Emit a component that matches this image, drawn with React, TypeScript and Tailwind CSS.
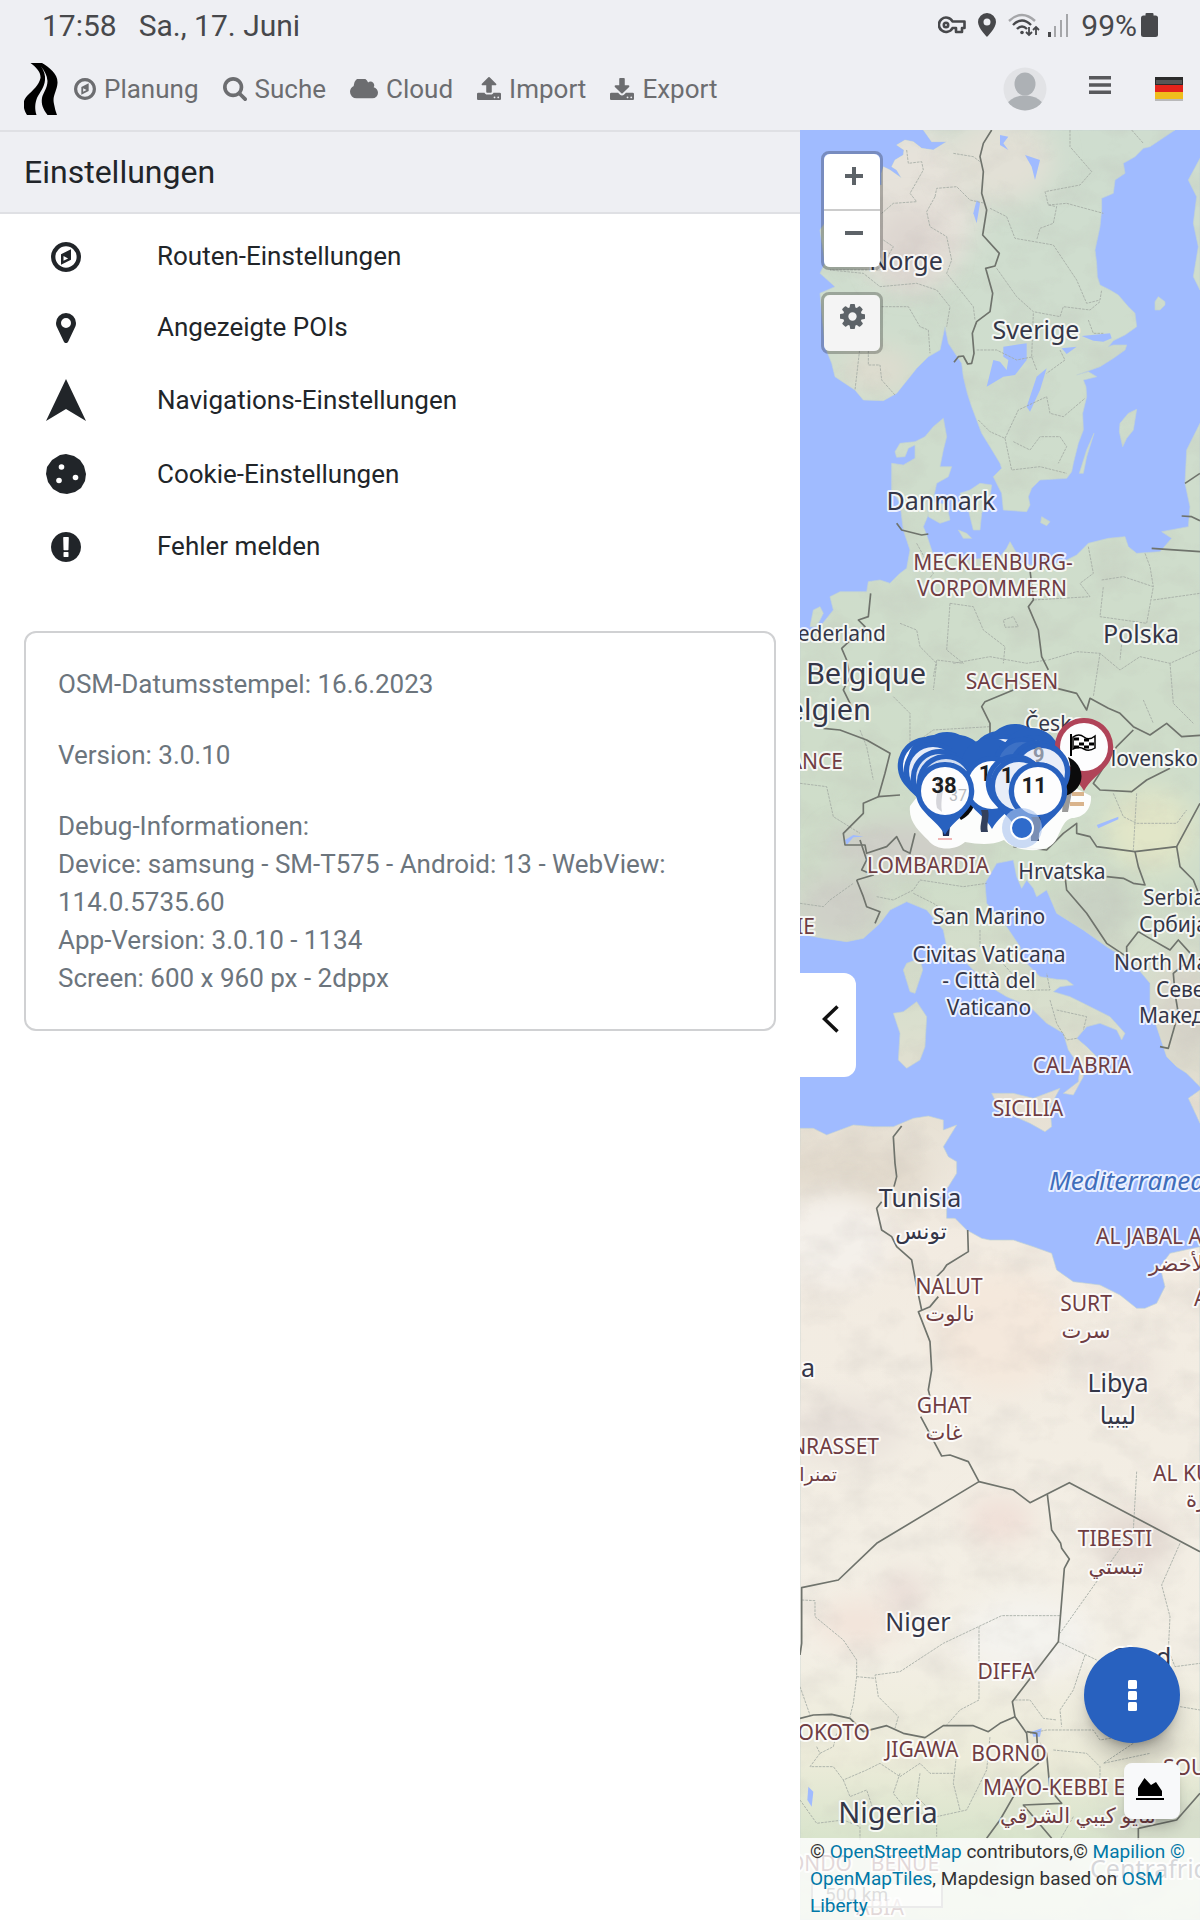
import type { ReactNode } from "react";

const ICONS = {
  compass:
    "M1664 896q0 209-103 385.500t-279.500 279.500-385.500 103-385.500-103-279.500-279.500-103-385.500 103-385.500 279.500-279.500 385.500-103 385.500 103 279.500 279.500 103 385.500zM1440 896a544 544 0 1 0-1088 0 544 544 0 1 0 1088 0zM1152 497v542l-512 256v-542zM768 850v238l236-118z",
  search:
    "M1216 832q0-185-131.500-316.500t-316.500-131.500-316.500 131.500-131.500 316.500 131.500 316.500 316.500 131.500 316.500-131.500 131.500-316.500zm512 832q0 52-38 90t-90 38q-54 0-90-38l-343-342q-179 124-399 124-143 0-273.500-55.500t-225-150-150-225-55.500-273.500 55.500-273.500 150-225 225-150 273.500-55.500 273.500 55.500 225 150 150 225 55.500 273.500q0 220-124 399l343 343q37 37 37 90z",
  cloud:
    "M1856 1152q0 159-112.500 271.500t-271.500 112.500h-1088q-185 0-316.500-131.500t-131.500-316.500q0-132 71-241.500t187-163.500q-2-28-2-43 0-212 150-362t362-150q158 0 286.500 88t187.500 230q70-62 166-62 106 0 181 75t75 181q0 75-41 138 129 30 213 134.500t84 239.500z",
  upload:
    "M1344 1472q0-26-19-45t-45-19-45 19-19 45 19 45 45 19 45-19 19-45zm256 0q0-26-19-45t-45-19-45 19-19 45 19 45 45 19 45-19 19-45zm128-224v320q0 40-28 68t-68 28h-1472q-40 0-68-28t-28-68v-320q0-40 28-68t68-28h427q21 56 70.500 92t110.500 36h256q61 0 110.500-36t70.500-92h427q40 0 68 28t28 68zm-325-648q-17 40-59 40h-256v448q0 26-19 45t-45 19h-256q-26 0-45-19t-19-45v-448h-256q-42 0-59-40-17-39 14-69l448-448q18-19 45-19t45 19l448 448q31 30 14 69z",
  download:
    "M1344 1344q0-26-19-45t-45-19-45 19-19 45 19 45 45 19 45-19 19-45zm256 0q0-26-19-45t-45-19-45 19-19 45 19 45 45 19 45-19 19-45zm128-224v320q0 40-28 68t-68 28h-1472q-40 0-68-28t-28-68v-320q0-40 28-68t68-28h465l135 136q58 56 136 56t136-56l136-136h464q40 0 68 28t28 68zm-325-569q17 41-14 70l-448 448q-18 19-45 19t-45-19l-448-448q-31-29-14-70 17-39 59-39h256v-448q0-26 19-45t45-19h256q26 0 45 19t19 45v448h256q42 0 59 39z",
  marker:
    "M1152 640q0-106-75-181t-181-75-181 75-75 181 75 181 181 75 181-75 75-181zm256 0q0 109-33 179l-364 774q-16 33-47.500 52t-67.500 19-67.500-19-46.500-52l-365-774q-33-70-33-179 0-212 150-362t362-150 362 150 150 362z",
  alert:
    "M896 128q209 0 385.500 103t279.500 279.500 103 385.500-103 385.500-279.500 279.500-385.500 103-385.500-103-279.500-279.500-103-385.500 103-385.500 279.500-279.500 385.500-103zm128 1247v-190q0-14-9-23.500t-22-9.500h-192q-13 0-23 10t-10 23v190q0 13 10 23t23 10h192q13 0 22-9.500t9-23.500zm-2-344l18-621q0-12-10-18-10-8-24-8h-220q-14 0-24 8-10 6-10 18l17 621q0 10 10 17.500t24 7.500h185q14 0 23.500-7.500t10.500-17.500z",
  gear:
    "M1152 896q0-106-75-181t-181-75-181 75-75 181 75 181 181 75 181-75 75-181zm512-109v222q0 12-8 23t-20 13l-185 28q-19 54-39 91 35 50 107 138 10 12 10 25t-9 23q-27 37-99 108t-94 71q-12 0-26-9l-138-108q-44 23-91 38-16 136-29 186-7 28-36 28h-222q-14 0-24.500-8.500t-11.500-21.500l-28-184q-49-16-90-37l-141 107q-10 9-25 9-14 0-25-11-126-114-165-168-7-10-7-23 0-12 8-23 15-21 51-66.500t54-70.500q-27-50-41-99l-183-27q-13-2-21-12.500t-8-23.500v-222q0-12 8-23t19-13l186-28q14-46 39-92-40-57-107-138-10-12-10-24 0-10 9-23 26-36 98.500-107.500t94.500-71.500q13 0 26 10l138 107q44-23 91-38 16-136 29-186 7-28 36-28h222q14 0 24.500 8.500t11.500 21.500l28 184q49 16 90 37l142-107q9-9 24-9 13 0 25 10 129 119 165 170 7 8 7 22 0 12-8 23-15 21-51 66.500t-54 70.500q26 50 41 98l183 28q13 2 21 12.500t8 23.500z",
};

type IconName = keyof typeof ICONS;

function Icon({ name, className, viewBox }: { name: IconName; className?: string; viewBox: string }) {
  return (
    <svg viewBox={viewBox} className={className} fill="currentColor" fillRule="evenodd" aria-hidden="true">
      <path d={ICONS[name]} />
    </svg>
  );
}

const NAV: { icon: IconName; label: string; viewBox: string; size: string }[] = [
  { icon: "compass", label: "Planung", viewBox: "128 128 1536 1536", size: "h-[22px] w-[22px]" },
  { icon: "search", label: "Suche", viewBox: "64 128 1664 1664", size: "h-6 w-6" },
  { icon: "cloud", label: "Cloud", viewBox: "-64 256 1920 1280", size: "h-5 w-7" },
  { icon: "upload", label: "Import", viewBox: "64 128 1664 1536", size: "h-6 w-6" },
  { icon: "download", label: "Export", viewBox: "64 0 1664 1536", size: "h-6 w-6" },
];

function StatusBar() {
  return (
    <div className="flex h-[50px] items-center justify-between px-[42px] text-[30px] text-[#47484b]">
      <div className="flex gap-[22px]">
        <span>17:58</span>
        <span>Sa., 17. Juni</span>
      </div>
      <div className="flex items-center gap-2">
        <svg viewBox="0 0 28 18" className="h-[18px] w-7" fill="none" stroke="currentColor" strokeWidth="2.600" aria-hidden="true">
          <path d="M14.500 5.500H26.500V12H24v4h-6v-4h-3.500a7.200 7.200 0 1 1 0-6.500z" strokeLinejoin="round" />
          <circle cx="8" cy="9" r="2.200" />
        </svg>
        <svg viewBox="0 0 18 24" className="ml-1 h-6 w-[18px]" fill="currentColor" fillRule="evenodd" aria-hidden="true">
          <path d="M9 0a9 9 0 0 1 9 9c0 6-9 15-9 15S0 15 0 9a9 9 0 0 1 9-9zM9 5.500a3.500 3.500 0 1 0 0 7 3.500 3.500 0 0 0 0-7z" />
        </svg>
        <svg viewBox="0 0 32 24" className="ml-1 h-6 w-8" fill="none" stroke="currentColor" strokeWidth="2.400" aria-hidden="true">
          <path d="M1 8Q14 -4 27 8" stroke="#a5a6a9" />
          <path d="M5 12Q14 3 23 12M9 16Q14 11 19 16" />
          <circle cx="14" cy="19.500" r="1.800" fill="currentColor" stroke="none" />
          <path d="M21 14v8m-3-3 3 3 3-3M28 22v-8m-3 3 3-3 3 3" strokeWidth="1.800" />
        </svg>
        <svg viewBox="0 0 21 23" className="h-[23px] w-[21px]" fill="#a5a6a9" aria-hidden="true">
          <rect y="18" width="3" height="5" fill="#47484b" />
          <rect x="6" y="12" width="2" height="11" />
          <rect x="12" y="6" width="2" height="17" />
          <rect x="18" y="0" width="2" height="23" />
        </svg>
        <div className="ml-1 flex items-center gap-1">
          <span>99%</span>
          <svg viewBox="0 0 17 24" className="h-6 w-[17px]" fill="currentColor" aria-hidden="true">
            <rect x="4.500" width="8" height="5" rx="1" />
            <rect y="2.500" width="17" height="21.500" rx="2.500" />
          </svg>
        </div>
      </div>
    </div>
  );
}

function Header() {
  return (
    <header className="border-b-2 border-[#dfe0e4] bg-[#eeeff3]">
      <StatusBar />
      <div className="flex h-20 items-center pr-4 pb-0.5 pl-6">
        <a href="#" aria-label="Startseite" className="mr-4">
          <svg viewBox="0 0 34 52" className="h-[52px] w-[34px]" aria-hidden="true">
            <path d="M6.500 0H18C26 5 34 11 33.500 20C33 28 28 33 30 41Q31 47 33 52H3C-2 44 -1 37 3 33C9 27 15 22 16.500 15C17 9 12 4 6.500 0Z" />
            <path d="M17 3.500C20 8 21.500 12 21 17C20.500 24 16 29 13 35C11 40 10.500 46 12.500 52H23.500C19 46 17 41 18 35C19 30 23.500 25 23.500 18C23 12 20.500 8 17 3.500Z" fill="#eeeff3" />
          </svg>
        </a>
        <nav className="flex items-center gap-6 text-[26px] text-[#6c6d70]">
          {NAV.map((item) => (
            <a key={item.label} href="#" className="flex items-center gap-2">
              <Icon name={item.icon} viewBox={item.viewBox} className={item.size} />
              {item.label}
            </a>
          ))}
        </nav>
        <div className="ml-auto flex items-center">
          <button type="button" aria-label="Profil" className="mr-[42px]">
            <svg viewBox="0 0 44 44" className="h-11 w-11" aria-hidden="true">
              <clipPath id="avatar">
                <circle cx="22" cy="22" r="21.500" />
              </clipPath>
              <g clipPath="url(#avatar)">
                <rect width="44" height="44" fill="#e2e3e6" />
                <ellipse cx="22" cy="17" rx="10.500" ry="11.500" fill="#adb1b5" />
                <ellipse cx="22" cy="41" rx="19" ry="12.500" fill="#adb1b5" />
              </g>
            </svg>
          </button>
          <button type="button" aria-label="Menü" className="mr-[43px] pb-2 text-[#58595c]">
            <svg viewBox="0 0 22 18" className="h-[18px] w-[22px]" fill="currentColor" aria-hidden="true">
              <path d="M0 0h22v3.500H0zM0 7.200h22v3.500H0zM0 14.500h22v3.500H0z" />
            </svg>
          </button>
          <button type="button" aria-label="Sprache: Deutsch">
            <svg viewBox="0 0 30 24" className="h-6 w-[30px]" aria-hidden="true">
              <rect x="1" y="2" width="28" height="22" fill="#b9b9ba" />
              <rect x="1" y="0" width="28" height="9" fill="#2b2b2b" />
              <rect x="2" y="3" width="26" height="4" fill="#565656" />
              <rect x="1" y="8" width="28" height="7" fill="#e3231b" />
              <rect x="1" y="15" width="28" height="7" fill="#f0bd1c" />
            </svg>
          </button>
        </div>
      </div>
    </header>
  );
}

const MENU: { label: string; row: string; icon: ReactNode }[] = [
  {
    label: "Routen-Einstellungen",
    row: "h-[71px]",
    icon: <Icon name="compass" viewBox="128 128 1536 1536" className="h-[30px] w-[30px]" />,
  },
  {
    label: "Angezeigte POIs",
    row: "h-[71px]",
    icon: <Icon name="marker" viewBox="384 128 1024 1536" className="h-[30px] w-5" />,
  },
  {
    label: "Navigations-Einstellungen",
    row: "h-[74px]",
    icon: (
      <svg viewBox="0 0 40 42" className="h-[42px] w-10" fill="currentColor" aria-hidden="true">
        <path d="M20 0L40 42L20 30L0 42Z" />
      </svg>
    ),
  },
  {
    label: "Cookie-Einstellungen",
    row: "h-[74px]",
    icon: (
      <svg viewBox="0 0 40 40" className="h-10 w-10" aria-hidden="true">
        <path
          d="M14 1L20 0L28 2L34 6L38 12L40 20L39 27L35 34L29 38L21 40L14 39L7 35L2 28L0 20L1 13L6 6Z"
          fill="currentColor"
        />
        <g fill="#fff">
          <circle cx="15.500" cy="13" r="2.800" />
          <circle cx="13" cy="26.500" r="2.800" />
          <circle cx="29.500" cy="23.500" r="2.800" />
        </g>
      </svg>
    ),
  },
  {
    label: "Fehler melden",
    row: "h-[71px]",
    icon: <Icon name="alert" viewBox="128 128 1536 1536" className="h-[30px] w-[30px]" />,
  },
];

function Settings() {
  return (
    <aside className="w-2/3 bg-white">
      <div className="flex h-[82px] items-center border-b-2 border-[#dfe0e4] bg-[#eeeff3] pl-6">
        <h1 className="text-[32px] text-[#212529]">Einstellungen</h1>
      </div>
      <ul className="pt-[7px]">
        {MENU.map((item) => (
          <li key={item.label}>
            <button
              type="button"
              className={`flex w-full items-center gap-[71px] pl-[46px] text-left text-[26px] text-[#212529] ${item.row}`}
            >
              <span className="flex w-10 justify-center">{item.icon}</span>
              {item.label}
            </button>
          </li>
        ))}
      </ul>
      <div className="mx-6 mt-[49px] rounded-xl border-2 border-[#d0d1d3] px-8 py-8 text-[26px] leading-[38px] text-[#6c757d]">
        <p className="mb-[33px]">OSM-Datumsstempel: 16.6.2023</p>
        <p className="mb-[33px]">Version: 3.0.10</p>
        <p>
          Debug-Informationen:
          <br />
          Device: samsung - SM-T575 - Android: 13 - WebView: 114.0.5735.60
          <br />
          App-Version: 3.0.10 - 1134
          <br />
          Screen: 600 x 960 px - 2dppx
        </p>
      </div>
    </aside>
  );
}

// Coastlines and borders, three units to the pixel.
const LAND = [
  "370,0 395,35 440,35 400,60 365,55 340,35 315,30 290,45 312,60 310,75 285,90 275,110 290,120 305,145 270,120 250,110 245,130 245,165 150,180 110,230 60,300 75,400 60,430 105,470 60,490 75,650 95,700 105,740 165,780 190,810 250,812 290,790 350,715 385,680 420,660 435,590 445,640 485,700 490,740 502,790 515,830 530,870 545,910 570,950 600,1000 605,1015 580,1040 595,1070 605,1090 610,1140 680,1145 690,1125 685,1100 695,1075 720,1050 800,1045 815,1025 820,1000 835,940 850,900 848,850 860,800 858,770 850,750 890,740 865,725 830,735 900,710 940,685 975,660 980,645 940,645 925,650 940,632 975,615 1010,590 1005,550 985,530 955,495 930,480 900,465 892,440 890,400 885,360 900,290 905,240 905,205 940,190 945,150 975,130 970,100 1005,80 1030,55 1050,50 1110,10 1125,0",
  "1200,85 1165,150 1190,200 1180,280 1195,350 1180,440 1200,480",
  "1200,880 1160,960 1155,1060 1170,1130 1165,1190 1085,1205 1115,1225 1080,1265 1010,1270 985,1250 975,1220 925,1225 865,1240 830,1275 790,1295 720,1310 660,1300 650,1270 630,1235 620,1255 600,1280 500,1290 440,1275 400,1275 380,1215 370,1190 395,1130 410,1060 445,1040 455,1010 420,1010 430,960 440,920 430,865 400,890 375,920 345,935 300,940 285,965 290,982 315,980 325,955 345,945 345,985 310,1005 275,1000 275,1080 300,1120 310,1200 330,1260 320,1315 300,1330 270,1360 240,1350 205,1355 200,1385 120,1385 90,1400 100,1440 60,1490 30,1510 0,1530 0,2412 70,2425 140,2435 190,2425 240,2380 270,2340 320,2315 380,2340 430,2400 440,2450 500,2500 570,2570 620,2600 690,2630 740,2680 790,2710 805,2760 840,2810 835,2855 790,2890 820,2895 850,2840 850,2815 890,2780 860,2750 830,2725 860,2690 900,2680 950,2700 965,2730 975,2710 930,2660 850,2620 810,2600 760,2585 780,2570 820,2565 800,2550 770,2548 720,2540 670,2490 660,2450 620,2390 560,2320 555,2260 590,2200 640,2190 650,2240 665,2275 680,2250 700,2275 710,2300 740,2280 770,2350 850,2400 920,2450 1000,2500 1050,2560 1050,2630 1080,2720 1100,2780 1130,2810 1160,2830 1200,2870",
  "380,1110 440,1125 450,1170 420,1180 385,1160",
  "480,1090 510,1080 540,1060 575,1065 570,1100 545,1150 540,1200 520,1200 505,1140",
  "475,1200 500,1210 515,1225 490,1225",
  "725,1160 750,1175 740,1187 722,1178",
  "1010,838 985,850 960,880 958,905 968,950 980,925 1000,900",
  "882,910 860,960 838,1030 850,1030 860,980",
  "1065,515 1075,500 1095,515 1095,525 1080,540 1065,540",
  "60,1430 70,1450 50,1490 30,1490 40,1440",
  "320,2500 360,2485 368,2520 345,2590 330,2585 310,2520",
  "280,2650 310,2645 350,2615 380,2660 375,2750 360,2790 320,2815 295,2790 300,2710",
  "575,2890 640,2890 700,2905 780,2875 750,2930 755,2990 735,3005 690,2980 600,2940",
  "1200,2880 1165,2905 1200,2980",
  "0,2995 40,2995 80,3015 160,2985 220,2990 280,2990 340,2965 385,2958 430,2970 430,3000 470,2985 430,3050 445,3080 470,3095 470,3130 445,3170 410,3200 410,3225 440,3235 440,3265 465,3265 500,3300 545,3325 570,3330 640,3330 700,3350 755,3370 770,3420 820,3455 860,3460 900,3465 960,3495 1010,3535 1035,3535 1070,3520 1095,3470 1085,3430 1080,3410 1110,3370 1200,3350 1200,5370 0,5370",
];

const LAKES = [
  "610,650 680,640 680,690 645,735 610,740 560,770 580,690 600,695 620,720 625,690 610,680",
  "740,715 720,780 690,845 680,830 710,740",
  "675,75 720,90 705,150 695,110",
  "600,15 625,20 610,40 625,60 600,45",
  "530,210 540,220 530,280 520,250",
  "845,618 930,610 935,625 910,635 880,632",
  "785,655 830,650 800,672",
  "695,4805 725,4795 720,4820 700,4820",
  "25,4970 40,4985 35,5030 22,5010",
  "890,2085 955,2060 955,2068 895,2095",
  "135,2130 160,2115 190,2120 160,2122 140,2145",
];

const BORDERS = [
  "575,0 550,40 540,80 550,125 545,190 560,240 548,315 598,370 585,408 557,415 578,490 570,545 530,575 517,610 522,670 515,700 503,702 490,678 475,680 462,697",
  "290,1180 305,1200 365,1215 385,1212",
  "212,1390 205,1460 175,1470 195,1490 125,1555 140,1590 150,1640 130,1680 155,1730",
  "70,1795 120,1800 200,1830 270,1870 255,1930 235,2000 300,1995",
  "235,2000 190,2020 190,2050 130,2110 135,2145 195,2145 200,2170 260,2150 290,2120 310,2160 330,2170 345,2110",
  "690,1320 700,1410 685,1430 715,1500 725,1580 745,1620",
  "640,1680 555,1715 545,1730 570,1780 570,1810",
  "750,1670 830,1690 860,1740 870,1705 925,1735 960,1750 1000,1790 1050,1815 1100,1780 1145,1820 1200,1816",
  "1055,1255 1200,1265",
  "1145,1158 1175,1160 1200,1172",
  "1155,1060 1200,1030",
  "1000,1800 950,1850 880,1960 900,1980 995,1985 1040,1950 1110,1915",
  "640,2150 740,2160 790,2110 830,2080 830,2110 870,2120 890,2150 1005,2165 1130,2150 1200,2020",
  "1005,2165 1015,2210 1035,2265 1000,2260 970,2245 920,2240",
  "795,2240 800,2280 860,2350 920,2440 980,2480 980,2450 1015,2405",
  "1015,2405 1040,2420 1110,2460 1135,2430 1180,2480 1120,2530 1125,2590 1135,2650 1105,2755 1080,2750",
  "1130,2150 1140,2210 1180,2250 1200,2300",
  "170,2250 190,2300 200,2330 240,2345 225,2380",
  "180,2130 200,2190 185,2220 220,2235 170,2250",
  "305,2988 280,3020 285,3100 290,3140 282,3170",
  "245,3215 230,3235 245,3300 275,3320 290,3350 335,3390 350,3470 365,3540",
  "503,3300 505,3365 440,3405 430,3420 410,3440",
  "415,3500 390,3530 355,3545 390,3635 395,3720 385,3780 390,3800",
  "362,3860 410,3950 425,3978 450,3975 505,3995 537,4055 640,4080 690,4118 808,4058 1200,4265",
  "537,4055 230,4240 115,4350 5,4373 5,4540 0,4575",
  "742,4093 755,4200 782,4240 785,4255 808,4287 793,4315 775,4535 637,4715 645,4760 680,4810 683,4840",
  "0,4765 40,4755 95,4753 150,4765 190,4805 260,4787 310,4810 375,4823 430,4787 520,4787 565,4805 600,4780 645,4760",
  "680,4805 710,4810 715,4900 665,4940 640,5000 600,5070 560,5125",
  "720,4840 740,4870 750,4980 785,5020 670,5025 755,5125",
  "1200,4990 1130,5070 1015,5095 1015,5130",
];

const REGIONS = [
  "320,60 325,100 365,95 370,120 330,190 350,215 280,220 245,250",
  "405,200 410,175 470,170 510,210 555,220",
  "405,200 380,245 390,290 440,320 455,390 440,430 520,530 525,570",
  "250,330 280,350 240,420 90,420 190,430 240,470 350,460 410,480 450,530 440,590",
  "245,530 325,530 360,590 385,600 390,670",
  "180,650 165,780",
  "205,640 205,705 240,705 245,750 285,795",
  "570,235 620,260 645,325 760,345 830,450 860,520 900,510 905,480",
  "590,415 650,500 700,545 780,560 790,530 870,540 900,515",
  "810,0 810,50 875,125 840,165 735,185 745,225 770,230 760,280 720,295 710,330",
  "745,225 800,220 910,250",
  "995,0 1030,40",
  "460,70 520,80 540,95",
  "700,550 695,680 710,720",
  "530,660 590,660 650,690 700,680",
  "780,660 795,690 740,730",
  "535,870 570,905 615,925 655,840 740,800 750,850 790,860 855,805",
  "615,925 635,1020 720,1010 800,1030",
  "640,935 690,960 720,920 780,920 800,950 775,1000",
  "865,570 880,610 910,610",
  "350,1240 400,1330 370,1370 420,1350",
  "450,1420 440,1560 490,1600 410,1590 400,1640",
  "450,1420 520,1430 550,1500 615,1550 610,1600",
  "615,1490 610,1470 640,1460 655,1490 615,1492",
  "300,1480 350,1500 360,1550 410,1600 400,1680",
  "460,1600 570,1580 680,1600 740,1590",
  "865,1250 880,1330 840,1360 870,1400 700,1410",
  "905,1350 970,1340 1060,1370 1040,1480 900,1460 910,1370",
  "1035,1270 1050,1310 1060,1370",
  "1060,1410 1200,1390",
  "745,1590 830,1565 900,1570 960,1620 1020,1580 1110,1600 1200,1560",
  "900,1570 880,1700",
  "970,1490 960,1590",
  "1110,1600 1120,1720 1180,1780",
  "1030,1710 1060,1780",
  "940,1990 970,2060 1010,2080 1130,2080 1160,2040",
  "1010,1990 1000,2160",
  "0,1960 80,1970 100,2060 180,2110",
  "280,1700 330,1750 330,1850 400,1800 570,1790",
  "180,1800 200,1850 220,1950",
  "0,2320 70,2330 90,2310 160,2260",
  "230,2300 280,2310 340,2280 360,2250 490,2270 560,2260",
  "340,2290 400,2320 430,2340",
  "540,2400 540,2450 590,2480 680,2580 750,2580 740,2530",
  "750,2610 770,2680 800,2730 830,2725",
  "770,2640 860,2660 850,2700",
  "1010,4025 1000,4200 780,4510",
  "1140,4240 1085,4365 1110,4460 1105,4560 1125,4610 1200,4600",
  "775,4535 890,4590",
  "855,4575 820,4680 780,4740 785,4790",
  "780,4457 605,4457 430,4540 300,4625 225,4635 235,4700 295,4760 285,4795",
  "537,4490 537,4710 480,4740 440,4785",
  "5,4410 45,4412 45,4460 130,4530 170,4590 170,4640 160,4720 150,4760",
  "170,4640 225,4645",
  "0,4670 30,4755",
  "645,4710 690,4710 730,4765 770,4770",
  "690,4810 740,4800 880,4800 900,4830 960,4820",
  "760,4860 860,4870 900,4910 900,4970",
  "1000,4840 910,4900 1050,4870",
  "1140,4730 1200,4740",
  "50,4850 60,4870 30,4910 100,4910 130,4950 200,4920 240,4900 300,4940 360,4900 390,4930 460,4930",
  "60,4870 100,4850 110,4810",
  "300,4930 280,4990 320,5040 410,5060 410,5120",
  "360,4930 350,5000 410,5060 500,5040 540,4960 560,4920 570,4820",
  "470,4870 460,4960 480,5040",
  "0,5010 50,5080 130,5070 180,5090 180,5130",
  "130,4950 150,5000 200,4980 220,5040",
  "820,5060 780,5130",
];

// Soft relief shading: cx, cy, rx, ry, colour.
const RELIEF: [number, number, number, number, string][] = [
  [330, 230, 200, 240, "#e6e2da"],
  [330, 350, 110, 120, "#ddd6d0"],
  [600, 90, 160, 130, "#e2e0d6"],
  [230, 720, 110, 70, "#dedccf"],
  [300, 2150, 220, 70, "#cfcec8"],
  [120, 2330, 130, 110, "#cfd0c8"],
  [1050, 2100, 130, 120, "#e2e6c8"],
  [880, 2330, 120, 90, "#c9d2c4"],
  [1150, 2650, 90, 170, "#d8d5ca"],
  [150, 3130, 240, 100, "#e2dacd"],
  [100, 3330, 170, 140, "#f4f0ea"],
  [600, 3600, 200, 180, "#f4e8dc"],
  [950, 3720, 120, 100, "#ece4dc"],
  [130, 3900, 180, 100, "#eae3dc"],
  [1000, 4230, 120, 90, "#e3d9d2"],
  [600, 4170, 100, 70, "#f0e0d8"],
  [310, 4390, 70, 60, "#e8dcd6"],
  [170, 4480, 120, 70, "#f2e4da"],
  [680, 4520, 200, 120, "#f4f3ee"],
  [1080, 5080, 200, 70, "#d5ddcb"],
];

type Label = {
  t: string;
  x: number;
  y: number;
  size?: number;
  anchor?: "start" | "middle" | "end";
  kind?: "country" | "region" | "sea";
};

const LABELS: Label[] = [
  { t: "Norge", x: 106, y: 270, size: 25 },
  { t: "Sverige", x: 236, y: 339, size: 25 },
  { t: "Danmark", x: 141, y: 510, size: 25 },
  { t: "MECKLENBURG-", x: 193, y: 570, kind: "region" },
  { t: "VORPOMMERN", x: 192, y: 596, kind: "region" },
  { t: "ederland", x: 86, y: 641, anchor: "end" },
  { t: "Polska", x: 341, y: 643, size: 25 },
  { t: "Belgique", x: 66, y: 684, size: 29 },
  { t: "elgien", x: 71, y: 720, size: 29, anchor: "end" },
  { t: "SACHSEN", x: 212, y: 689, kind: "region" },
  { t: "Česko", x: 225, y: 731, anchor: "start" },
  { t: "ANCE", x: 43, y: 769, anchor: "end", kind: "region" },
  { t: "lovensko", x: 398, y: 766, anchor: "end" },
  { t: "LOMBARDIA", x: 128, y: 873, kind: "region" },
  { t: "Hrvatska", x: 262, y: 879 },
  { t: "Serbia", x: 343, y: 905, anchor: "start" },
  { t: "Србија", x: 339, y: 932, anchor: "start" },
  { t: "San Marino", x: 189, y: 924 },
  { t: "IE", x: 15, y: 934, anchor: "end", kind: "region" },
  { t: "Civitas Vaticana", x: 189, y: 962 },
  { t: "- Città del", x: 189, y: 988 },
  { t: "Vaticano", x: 189, y: 1015 },
  { t: "North Ma", x: 314, y: 970, anchor: "start" },
  { t: "Севе", x: 356, y: 997, anchor: "start" },
  { t: "Македо", x: 339, y: 1023, anchor: "start" },
  { t: "CALABRIA", x: 282, y: 1073, kind: "region" },
  { t: "SICILIA", x: 228, y: 1116, kind: "region" },
  { t: "Mediterranean", x: 249, y: 1190, size: 26, anchor: "start", kind: "sea" },
  { t: "Tunisia", x: 120, y: 1207, size: 25 },
  { t: "تونس", x: 121, y: 1239, size: 22 },
  { t: "NALUT", x: 149, y: 1294, kind: "region" },
  { t: "نالوت", x: 150, y: 1321, kind: "region" },
  { t: "AL JABAL A", x: 296, y: 1244, anchor: "start", kind: "region" },
  { t: "الأخضر", x: 349, y: 1271, anchor: "start", kind: "region" },
  { t: "SURT", x: 286, y: 1311, kind: "region" },
  { t: "سرت", x: 286, y: 1338, kind: "region" },
  { t: "A", x: 394, y: 1306, anchor: "start", kind: "region" },
  { t: "a", x: 15, y: 1377, size: 25, anchor: "end" },
  { t: "Libya", x: 318, y: 1392, size: 25 },
  { t: "ليبيا", x: 318, y: 1424, size: 24 },
  { t: "GHAT", x: 144, y: 1413, kind: "region" },
  { t: "غات", x: 144, y: 1440, kind: "region" },
  { t: "NRASSET", x: 79, y: 1454, anchor: "end", kind: "region" },
  { t: "تمنراست", x: 37, y: 1481, size: 19, anchor: "end", kind: "region" },
  { t: "AL KU", x: 353, y: 1481, anchor: "start", kind: "region" },
  { t: "الكفرة", x: 386, y: 1507, anchor: "start", kind: "region" },
  { t: "TIBESTI", x: 315, y: 1546, kind: "region" },
  { t: "تبستي", x: 316, y: 1574, kind: "region" },
  { t: "Niger", x: 118, y: 1631, size: 25 },
  { t: "DIFFA", x: 206, y: 1679, kind: "region" },
  { t: "Chad", x: 341, y: 1666, size: 25 },
  { t: "OKOTO", x: 70, y: 1740, anchor: "end", kind: "region" },
  { t: "JIGAWA", x: 122, y: 1757, kind: "region" },
  { t: "BORNO", x: 209, y: 1761, kind: "region" },
  { t: "SOU", x: 363, y: 1775, anchor: "start", kind: "region" },
  { t: "MAYO-KEBBI E", x: 183, y: 1795, anchor: "start", kind: "region" },
  { t: "مايو كيبي الشرقي", x: 200, y: 1823, anchor: "start", kind: "region" },
  { t: "Nigeria", x: 88, y: 1823, size: 29 },
  { t: "ONDO", x: 52, y: 1871, anchor: "end", kind: "region" },
  { t: "BENUE", x: 105, y: 1871, kind: "region" },
  { t: "ABIA", x: 80, y: 1915, kind: "region" },
  { t: "Centrafrique", x: 290, y: 1878, size: 25, anchor: "start" },
];

const LABEL_FILL = { country: "#343648", region: "#6f3d43", sea: "#3f6dbb" };

function Pin({ x, y, color = "#2861bf", opacity = 1 }: { x: number; y: number; color?: string; opacity?: number }) {
  return (
    <g transform={`translate(${x} ${y})`}>
      <path d="M0 -29A29 29 0 0 1 23 18C15 28 5 34 0 44C-5 34 -15 28 -23 18A29 29 0 0 1 0 -29Z" fill={color} />
      <circle r="24" fill="#fdfdfe" opacity={opacity} />
    </g>
  );
}

function PinText({ x, y, children }: { x: number; y: number; children: string }) {
  return (
    <text x={x} y={y} textAnchor="middle" fontSize="22" fontWeight="700" fontFamily="Roboto, sans-serif" fill="#1c1e22">
      {children}
    </text>
  );
}

function Markers() {
  return (
    <g>
      <path
        d="M110 806C108 822 120 832 128 840C138 853 158 849 165 842C178 844 190 846 204 840C214 852 250 856 257 838C262 828 264 820 272 818C284 818 292 808 291 796L240 770L130 780Z"
        fill="#fff"
        opacity="0.940"
      />
      <path d="M272 794h12M270 804h14" stroke="#d9b48c" strokeWidth="4" />
      <path d="M262 812h6l4-20h-8z" fill="#9a9a9a" />
      <Pin x={127} y={766} />
      <Pin x={136} y={764} opacity={0.1} />
      <Pin x={147} y={761} opacity={0} />
      <Pin x={157} y={764} opacity={0} />
      <Pin x={200} y={760} opacity={0} />
      <Pin x={215} y={753} opacity={0} />
      <Pin x={203} y={763} opacity={0.9} />
      <Pin x={190} y={767} opacity={0} />
      <Pin x={231} y={757} opacity={0} />
      <Pin x={234} y={764} opacity={0.9} />
      <Pin x={222} y={766} opacity={0.1} />
      <Pin x={284} y={747} color="#b04358" />
      <path d="M268 757C286 765 287 789 265 796L259 784C270 780 273 770 268 757Z" fill="#0b0b0c" />
      <Pin x={238} y={769} opacity={0.85} />
      <Pin x={241} y={772} opacity={0.9} />
      <text x="233" y="762" fontSize="20" fontWeight="700" fontFamily="Roboto, sans-serif" fill="#8d95a5">
        9
      </text>
      <Pin x={133} y={771} opacity={0.9} />
      <Pin x={140} y={778} opacity={0.85} />
      <Pin x={146} y={783} opacity={0.8} />
      <path d="M172 784C180 802 172 814 161 820L152 808Z" fill="#0b0b0c" />
      <Pin x={192} y={785} />
      <PinText x={185} y={781}>1</PinText>
      <Pin x={215} y={783} opacity={0.9} />
      <Pin x={219} y={786} opacity={0.9} />
      <PinText x={207} y={783}>1</PinText>
      <path d="M181 810C184 818 179 824 181 832H188C186 824 190 818 188 810Z" fill="#33405c" />
      <path d="M142 826h8l-1 10h-6z" fill="#1c2c54" />
      <Pin x={145} y={791} />
      <path d="M137 780C140 792 134 796 137 808L142 812C140 800 144 792 143 780Z" fill="#d5d5da" />
      <text x="149" y="801" fontSize="16" fill="#b9bbc0" fontFamily="Roboto, sans-serif">
        37
      </text>
      <PinText x={144} y={793}>38</PinText>
      <path d="M138 839h14" stroke="#f0b6b6" strokeWidth="2" />
      <Pin x={238} y={791} />
      <PinText x={234} y={793}>11</PinText>
      <path d="M231 817C236 824 230 832 231 841H239C238 832 242 824 240 817Z" fill="#33405c" />
      <circle cx="222" cy="828" r="20" fill="#a9c3ee" opacity="0.600" />
      <circle cx="222" cy="828" r="11" fill="#2f6bcb" stroke="#fff" strokeWidth="2" />
      <g stroke="#000" fill="none">
        <path d="M271 734v22" strokeWidth="2" />
        <path d="M273 737Q279 733 284 737T295 736V748Q289 752 284 749T273 749Z" strokeWidth="1.500" />
        <path d="M274 739h5M284 740h5M279 744h5M289 744h5M274 747h5M284 747h5" strokeWidth="3" />
      </g>
    </g>
  );
}

function MapCanvas() {
  return (
    <svg
      viewBox="0 130 400 1790"
      preserveAspectRatio="xMinYMin slice"
      className="absolute inset-0 h-full w-full bg-[#a0bbff]"
      role="img"
      aria-label="Karte"
    >
      <defs>
        <linearGradient id="land" gradientUnits="userSpaceOnUse" x1="0" y1="0" x2="0" y2="5370">
          <stop offset="0" stopColor="#cfddcf" />
          <stop offset="0.420" stopColor="#cfddc9" />
          <stop offset="0.500" stopColor="#dadfce" />
          <stop offset="0.540" stopColor="#e5dfd2" />
          <stop offset="0.620" stopColor="#f2ebe1" />
          <stop offset="0.850" stopColor="#f3efe5" />
          <stop offset="0.910" stopColor="#ecebd9" />
          <stop offset="0.960" stopColor="#d6e3ca" />
          <stop offset="1" stopColor="#cfdec3" />
        </linearGradient>
        <clipPath id="landClip">
          {LAND.map((points) => (
            <polygon key={points} points={points} />
          ))}
        </clipPath>
        <filter id="soft" x="-50%" y="-50%" width="200%" height="200%">
          <feGaussianBlur stdDeviation="38" />
        </filter>
        <filter id="terrain" x="0" y="0" width="100%" height="100%">
          <feTurbulence type="fractalNoise" baseFrequency="0.008 0.011" numOctaves="4" seed="8" />
          <feColorMatrix values="0 0 0 0 0.450  0 0 0 0 0.420  0 0 0 0 0.400  1.400 0 0 0 -0.600" />
        </filter>
      </defs>
      <g transform="translate(0 130) scale(0.33333)">
        {LAND.map((points) => (
          <polygon key={points} points={points} fill="url(#land)" stroke="#c3d3d3" strokeWidth="2" strokeLinejoin="round" />
        ))}
        <g clipPath="url(#landClip)">
          {RELIEF.map(([cx, cy, rx, ry, fill]) => (
            <ellipse key={`${cx}-${cy}`} cx={cx} cy={cy} rx={rx} ry={ry} fill={fill} filter="url(#soft)" />
          ))}
          <rect width="1200" height="5370" filter="url(#terrain)" opacity="0.260" />
        </g>
        {LAKES.map((points) => (
          <polygon key={points} points={points} fill="#a0bbff" />
        ))}
        <g fill="none" stroke="#a3aba3" strokeWidth="2.500" strokeDasharray="8 3" strokeLinejoin="round">
          {REGIONS.map((points) => (
            <polyline key={points} points={points} />
          ))}
        </g>
        <g fill="none" stroke="#6f736c" strokeWidth="5" strokeLinejoin="round">
          {BORDERS.map((points) => (
            <polyline key={points} points={points} />
          ))}
        </g>
      </g>
      <g fontFamily='"Noto Sans", "DejaVu Sans", sans-serif' stroke="#ffffff" strokeOpacity="0.800" strokeWidth="4" strokeLinejoin="round">
        {LABELS.map(({ t, x, y, size = 21, anchor = "middle", kind = "country" }) => (
          <text
            key={`${t}-${y}`}
            x={x}
            y={y}
            fontSize={size}
            textAnchor={anchor}
            fill={LABEL_FILL[kind]}
            fontStyle={kind === "sea" ? "italic" : undefined}
            paintOrder="stroke"
          >
            {t}
          </text>
        ))}
      </g>
      <Markers />
    </svg>
  );
}

function MapView() {
  return (
    <main className="relative -mt-0.5 flex-1 overflow-hidden">
      <MapCanvas />
      <div className="absolute top-[21px] left-[21px] flex flex-col gap-[22px] text-[#5d6368]">
        <div className="flex flex-col rounded-lg border-3 border-black/25">
          <button type="button" aria-label="Vergrößern" className="flex h-[57px] w-14 justify-center rounded-t-md border-b-2 border-[#ccc] bg-white pt-[13px] pl-1">
            <svg viewBox="0 0 18 18" className="h-[18px] w-[18px]" fill="currentColor" aria-hidden="true">
              <path d="M7 0h4v7h7v4h-7v7H7v-7H0V7h7z" />
            </svg>
          </button>
          <button type="button" aria-label="Verkleinern" className="flex h-14 w-14 justify-center rounded-b-md bg-white pt-[13px] pl-1">
            <svg viewBox="0 0 18 18" className="h-[18px] w-[18px]" fill="currentColor" aria-hidden="true">
              <path d="M0 7h18v4H0z" />
            </svg>
          </button>
        </div>
        <div className="rounded-lg border-3 border-black/25">
          <button type="button" aria-label="Karteneinstellungen" className="flex h-14 w-14 justify-center rounded-md bg-[#f4f4f4] pt-[9px]">
            <Icon name="gear" viewBox="128 128 1536 1536" className="h-[25px] w-[25px]" />
          </button>
        </div>
      </div>
      <button
        type="button"
        aria-label="Seitenleiste einklappen"
        className="absolute top-1/2 left-0 flex h-[104px] w-14 -translate-y-1/2 items-center rounded-r-xl bg-white pb-3 pl-[22px]"
      >
        <svg viewBox="0 0 17 28" className="h-7 w-[17px]" fill="none" stroke="#111" strokeWidth="3.500" aria-hidden="true">
          <path d="M15.500 1.500L2.500 14L15.500 26.500" />
        </svg>
      </button>
      <div className="absolute right-5 bottom-[101px] flex flex-col items-end gap-5">
        <button type="button" aria-label="Aktionen" className="flex h-24 w-24 items-center justify-center rounded-full bg-[#2861bf] shadow-xl shadow-black/25">
          <svg viewBox="0 0 9 31" className="h-[31px] w-[9px]" fill="#fff" aria-hidden="true">
            <rect width="9" height="9" rx="1.500" />
            <rect y="11" width="9" height="9" rx="1.500" />
            <rect y="22" width="9" height="9" rx="1.500" />
          </svg>
        </button>
        <button type="button" aria-label="Höhenprofil" className="flex h-14 w-14 items-center rounded-lg bg-[#f8f9fa] pb-1 pl-3 shadow-lg shadow-black/20">
          <svg viewBox="0 0 28 22" className="h-[22px] w-7" aria-hidden="true">
            <path d="M2 18V10L8.500 0L15 7L20 4L26 13V18ZM0 20H28V22H0Z" />
          </svg>
        </button>
      </div>
      <div className="absolute bottom-3 left-[11px] w-[132px] border-2 border-t-0 border-[#999] bg-white/60 pl-3 text-[19px] leading-[22px] text-[#555]">
        500 km
      </div>
      <div className="absolute inset-x-0 bottom-0 bg-white/80 pb-px pl-2.5 text-[19px] leading-[27px] text-[#333]">
        © <a href="#" className="text-[#0078a8]">OpenStreetMap</a> contributors,©{" "}
        <a href="#" className="text-[#0078a8]">Mapilion</a>{" "}
        <a href="#" className="text-[#0078a8]">© OpenMapTiles</a>, Mapdesign based on{" "}
        <a href="#" className="text-[#0078a8]">OSM Liberty</a>
      </div>
    </main>
  );
}

export default function App() {
  return (
    <div className="flex min-h-screen flex-col bg-white font-[Roboto,sans-serif]">
      <Header />
      <div className="flex flex-1">
        <Settings />
        <MapView />
      </div>
    </div>
  );
}
